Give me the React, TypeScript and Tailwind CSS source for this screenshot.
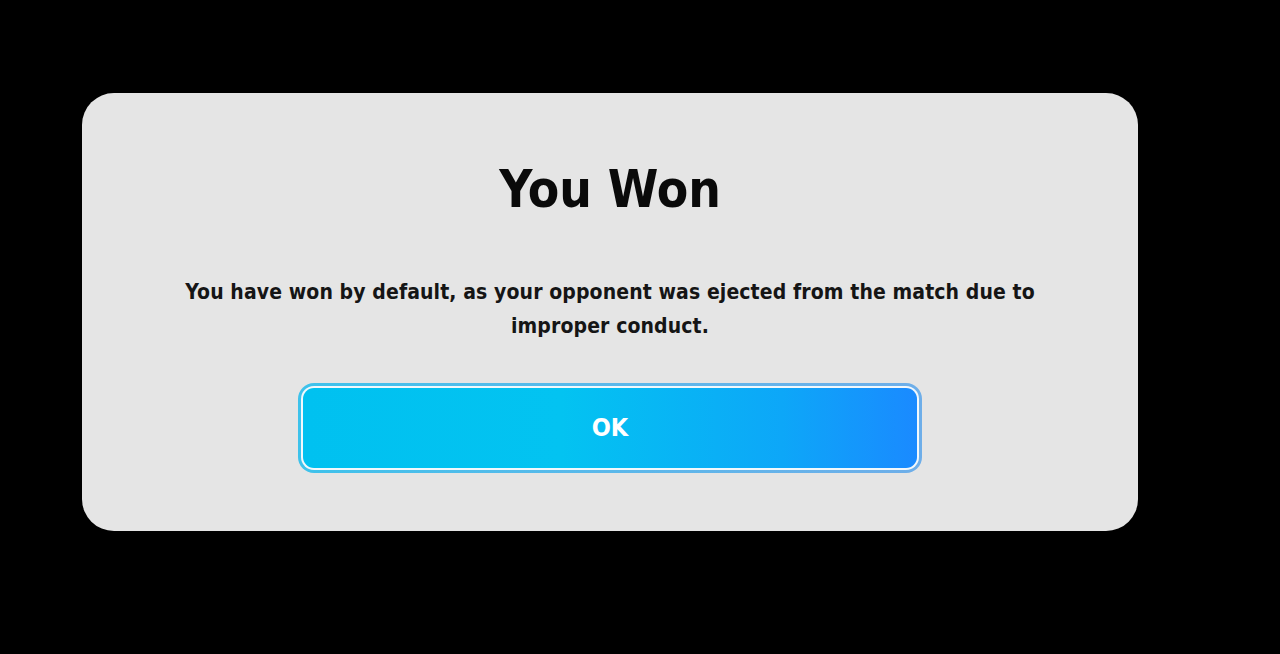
import React from "react";

const App = () => {
  return (
    <div className="h-[654px] w-[1280px] bg-black pl-[82px] pt-[93px]">
      {/* dialog card */}
      <div className="flex h-[438px] w-[1056px] flex-col items-center rounded-[32px] bg-[#e5e5e5] pt-[66px]">
        <h1 className="font-['DejaVu_Sans_Condensed','DejaVu_Sans',sans-serif] text-[51px] font-bold leading-[62px] text-[#0a0a0a]">
          You Won
        </h1>

        <p className="mt-[54px] w-[880px] text-center font-['DejaVu_Sans_Condensed','DejaVu_Sans',sans-serif] text-[21px] leading-[34px] font-bold tracking-[0.1px] text-[#151515]">
          You have won by default, as your opponent was ejected from the match due to improper conduct.
        </p>

        {/* OK button */}
        <div className="mt-[40px] rounded-[16px] bg-gradient-to-r from-[#3dc2eb] to-[#6eaee9] p-[3px]">
          <div className="rounded-[13px] bg-[#f2f8fc] p-[2px]">
            <button className="flex h-[80px] w-[614px] items-center justify-center rounded-[11px] bg-[linear-gradient(90deg,#00c1f0_0%,#03c3f1_42%,#0da7f8_78%,#1a8aff_100%)] font-['DejaVu_Sans_Condensed','DejaVu_Sans',sans-serif] text-[25px] font-bold text-white">
              OK
            </button>
          </div>
        </div>
      </div>
    </div>
  );
};

export default App;
